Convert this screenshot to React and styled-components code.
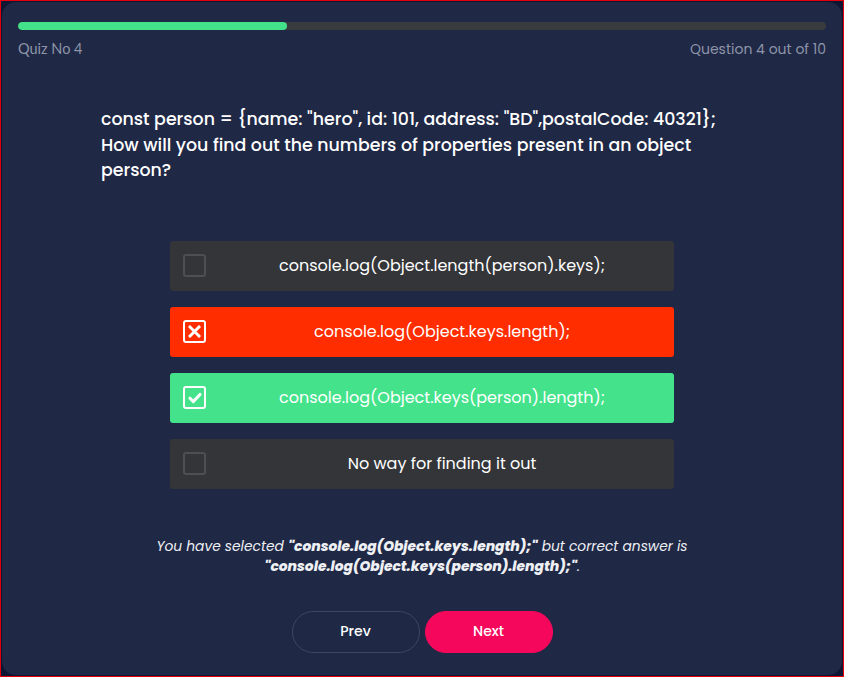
import styled, { createGlobalStyle } from "styled-components"

const GlobalStyle = createGlobalStyle`
    html, body, #root {
        margin: 0;
        padding: 0;
        height: 100%;
    }
    body {
        font-family: "Poppins", "Inter", "Noto Sans", sans-serif;
    }
    * {
        box-sizing: border-box;
    }
`

const Frame = styled.div`
    height: 677px;
    border: 1px solid #e3000b;
    background: #0f1633;
    padding: 1px;
`

const Card = styled.div`
    height: 100%;
    background: #1f2845;
    border-radius: 14px;
    padding: 20px 16px 0;
`

const ProgressTrack = styled.div`
    height: 8px;
    border-radius: 4px;
    background: #383c3e;
    overflow: hidden;
`

const ProgressFill = styled.div`
    height: 100%;
    border-radius: 4px;
    background: #43e189;
`

const Meta = styled.div`
    display: flex;
    justify-content: space-between;
    margin-top: 10px;
    color: #8d94a8;
    font-size: 14px;
    line-height: 18px;
`

const QuizNo = styled.span`
    font-family: "Lato", sans-serif;
    font-size: 14.5px;
`

const Question = styled.div`
    width: 642px;
    margin: 49px auto 0;
    padding-right: 16px;
    color: #fff;
    font-size: 17.4px;
    font-weight: 500;
    line-height: 25.5px;
`

const Options = styled.div`
    width: 504px;
    margin: 57px auto 0;
    display: flex;
    flex-direction: column;
    gap: 16px;
`

const optionColors = {
    idle: "#333538",
    wrong: "#ff2d00",
    right: "#44e38b",
}

const Option = styled.div`
    height: 50px;
    display: flex;
    align-items: center;
    padding-left: 13px;
    border-radius: 3px;
    background: ${props => optionColors[props.$state]};
    color: #fff;
    font-size: 16px;
`

const Box = styled.div`
    width: 23px;
    height: 23px;
    flex-shrink: 0;
    border-radius: 3px;
    border: 2px solid ${props => props.$state === "idle" ? "#4d4f52" : "#fff"};
    display: flex;
    align-items: center;
    justify-content: center;
`

const OptionText = styled.div`
    flex: 1;
    text-align: center;
    padding-left: 4px;
`

const Feedback = styled.div`
    margin-top: 48px;
    text-align: center;
    color: #eef0f4;
    font-size: 13.8px;
    font-style: italic;
    line-height: 20px;

    b {
        font-weight: 800;
    }
`

const Buttons = styled.div`
    margin-top: 34px;
    display: flex;
    justify-content: center;
    gap: 5px;
`

const Button = styled.button`
    width: 128px;
    height: 42px;
    border-radius: 21px;
    border: 1px solid ${props => props.$primary ? "#f5085c" : "#3b4660"};
    background: ${props => props.$primary ? "#f5085c" : "transparent"};
    color: #fff;
    font-family: inherit;
    font-size: 14px;
    font-weight: 500;
`

const options = [
    {text: "console.log(Object.length(person).keys);", state: "idle"},
    {text: "console.log(Object.keys.length);", state: "wrong"},
    {text: "console.log(Object.keys(person).length);", state: "right"},
    {text: "No way for finding it out", state: "idle"},
]

function Mark({state}) {
    if (state === "wrong") {
        return (
            <svg width="13" height="13" viewBox="0 0 13 13">
                <path d="M2 2 L11 11 M11 2 L2 11" stroke="#fff" strokeWidth="3" strokeLinecap="square" />
            </svg>
        )
    }
    if (state === "right") {
        return (
            <svg width="14" height="12" viewBox="0 0 14 12">
                <path d="M2 6.2 L5.4 9.6 L12 2.4" stroke="#fff" strokeWidth="3" fill="none" strokeLinecap="round" strokeLinejoin="round" />
            </svg>
        )
    }
    return null
}

function App() {
  return (
      <Frame>
        <GlobalStyle />
        <Card>
            <ProgressTrack>
                <ProgressFill style={{width: `${(4 - 1) / 9 * 100}%`}} />
            </ProgressTrack>
            <Meta>
                <QuizNo>Quiz No 4</QuizNo>
                <span>Question 4 out of 10</span>
            </Meta>
            <Question>
                const person = {'{'}name: "hero", id: 101, address: "BD",postalCode: 40321{'}'};
                <br />
                How will you find out the numbers of properties present in an object person?
            </Question>
            <Options>
                {options.map(option => {
                    return (
                        <Option key={option.text} $state={option.state}>
                            <Box $state={option.state}><Mark state={option.state} /></Box>
                            <OptionText>{option.text}</OptionText>
                        </Option>
                    )
                })}
            </Options>
            <Feedback>
                You have selected <b>"console.log(Object.keys.length);"</b> but correct answer is
                <br />
                <b>"console.log(Object.keys(person).length);"</b>.
            </Feedback>
            <Buttons>
                <Button>Prev</Button>
                <Button $primary>Next</Button>
            </Buttons>
        </Card>
      </Frame>
  );
}

export default App;
